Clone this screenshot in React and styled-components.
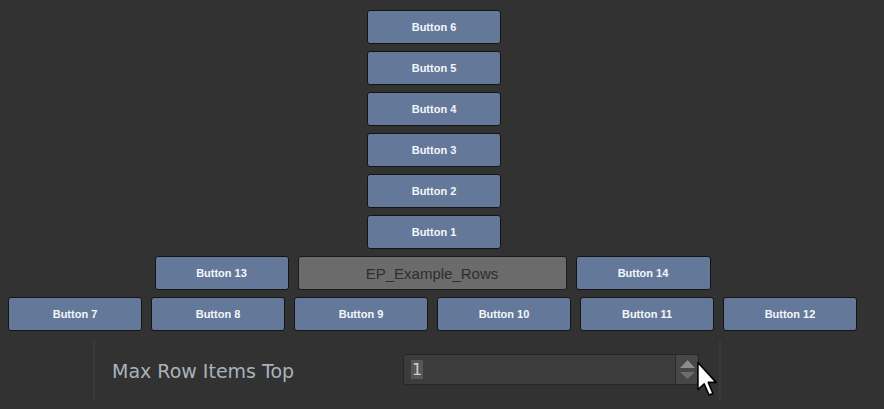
import React from "react";
import styled, { createGlobalStyle } from "styled-components";

const GlobalStyle = createGlobalStyle`
  html, body {
    margin: 0;
    padding: 0;
    background: #323232;
  }
`;

const Page = styled.div`
  position: relative;
  width: 884px;
  height: 409px;
  overflow: hidden;
  background: #323232;
  padding: 10px 0 0 8px;
  box-sizing: border-box;
`;

const Layout = styled.div`
  width: 849px;
  display: flex;
  flex-direction: column;
  align-items: center;
  gap: 7px;
`;

const Stack = styled.div`
  display: flex;
  flex-direction: column;
  gap: 7px;
  padding-left: 3px;
`;

const Row = styled.div`
  display: flex;
  gap: 9px;
`;

const Button = styled.button`
  width: ${(p) => p.$w || 134}px;
  height: 34px;
  box-sizing: border-box;
  background: #64799a;
  border: 1px solid #141414;
  border-radius: 3px;
  color: #f4f6fa;
  font-family: "Liberation Sans", Arial, sans-serif;
  font-weight: bold;
  font-size: 11px;
  padding: 0;
  display: flex;
  align-items: center;
  justify-content: center;
`;

const Label = styled.div`
  width: 269px;
  height: 34px;
  box-sizing: border-box;
  background: #6b6b6b;
  border: 1px solid #1a1a1a;
  border-radius: 3px;
  color: #2e2e2e;
  font-family: "Liberation Sans", Arial, sans-serif;
  font-size: 15px;
  display: flex;
  align-items: center;
  justify-content: center;
`;

const Panel = styled.div`
  margin: 10px 0 0 85px;
  width: 628px;
  height: 59px;
  box-sizing: border-box;
  border-left: 2px solid #3a3a3a;
  border-right: 2px solid #3a3a3a;
  display: flex;
  align-items: center;
  padding-left: 17px;
`;

const PropName = styled.div`
  width: 291px;
  font-family: "DejaVu Sans", Verdana, sans-serif;
  font-size: 19px;
  color: #a9b2bc;
  margin-top: 1px;
`;

const Field = styled.div`
  width: 296px;
  height: 31px;
  box-sizing: border-box;
  background: #3c3c3c;
  border: 1px solid #262626;
  border-radius: 3px;
  display: flex;
  align-items: center;
  justify-content: space-between;
  margin-top: -3px;
`;

const Value = styled.span`
  margin-left: 7px;
  background: #575757;
  color: #c9d2cc;
  font-family: "DejaVu Sans", Verdana, sans-serif;
  font-size: 16px;
  line-height: 19px;
  padding: 0 1px;
`;

const Spinner = styled.div`
  width: 22px;
  height: 29px;
  background: #474747;
  border-left: 1px solid #2a2a2a;
  border-radius: 0 3px 3px 0;
  display: flex;
  flex-direction: column;
  align-items: center;
  justify-content: center;
  gap: 4px;
`;

const Cursor = styled.svg`
  position: absolute;
  left: 696px;
  top: 361px;
`;

function App() {
  return (
    <Page>
      <GlobalStyle />
      <Layout>
        <Stack>
          {[6, 5, 4, 3, 2, 1].map((n) => (
            <Button key={n}>Button {n}</Button>
          ))}
        </Stack>
        <Row>
          <Button>Button 13</Button>
          <Label>EP_Example_Rows</Label>
          <Button $w={135}>Button 14</Button>
        </Row>
        <Row>
          {[7, 8, 9, 10, 11, 12].map((n) => (
            <Button key={n}>Button {n}</Button>
          ))}
        </Row>
      </Layout>
      <Panel>
        <PropName>Max Row Items Top</PropName>
        <Field>
          <Value>1</Value>
          <Spinner>
            <svg width="15" height="8" viewBox="0 0 15 8">
              <polygon points="7.5,0 15,8 0,8" fill="#8c8c8c" />
            </svg>
            <svg width="15" height="7" viewBox="0 0 15 7">
              <polygon points="0,0 15,0 7.5,7" fill="#6e6e6e" />
            </svg>
          </Spinner>
        </Field>
      </Panel>
      <Cursor width="26" height="38" viewBox="0 0 16 24">
        <polygon
          points="1,1 1,18 5,14.5 8,21.5 10.5,20.5 7.5,13.5 12.5,13.5"
          fill="#ffffff"
          stroke="#000000"
          strokeWidth="1"
          strokeLinejoin="round"
        />
      </Cursor>
    </Page>
  );
}

export default App;
